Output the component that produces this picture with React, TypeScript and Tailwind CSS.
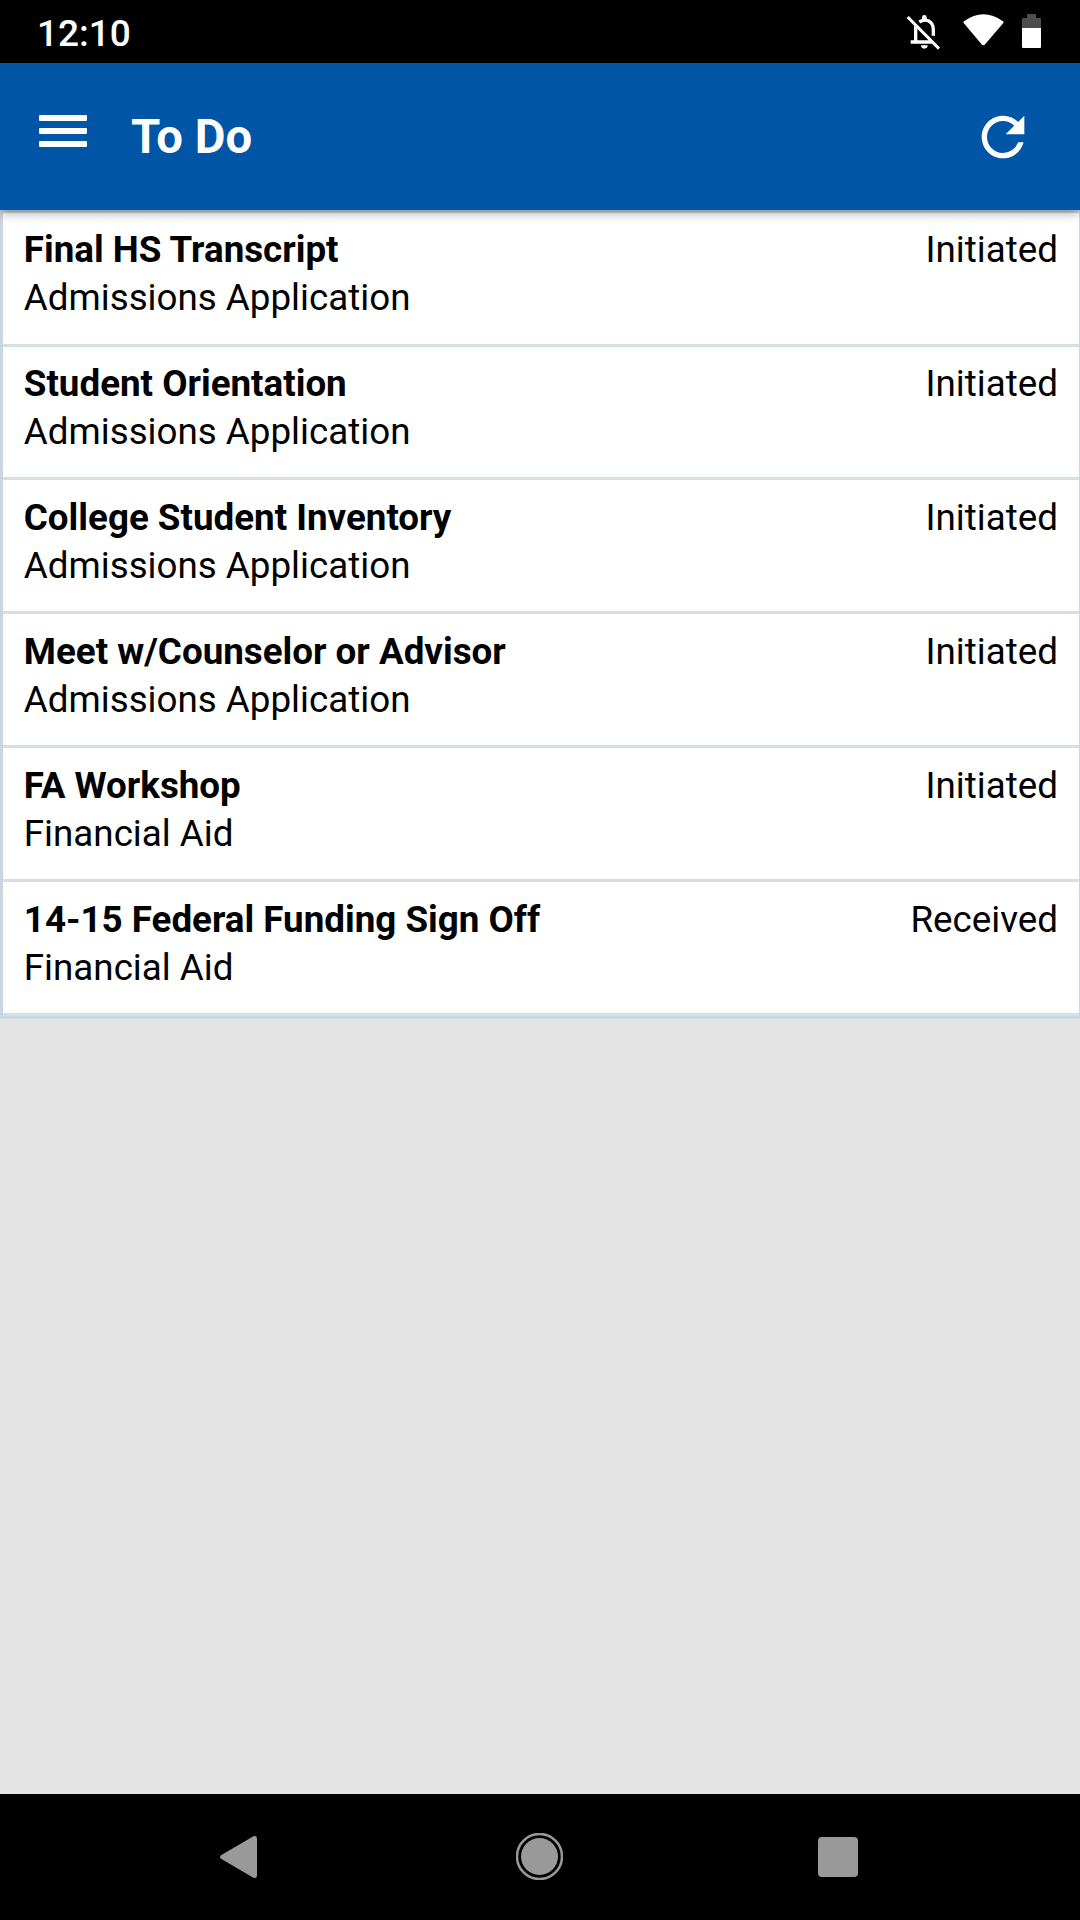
import React from 'react';

const items = [
  { title: 'Final HS Transcript', category: 'Admissions Application', status: 'Initiated' },
  { title: 'Student Orientation', category: 'Admissions Application', status: 'Initiated' },
  { title: 'College Student Inventory', category: 'Admissions Application', status: 'Initiated' },
  { title: 'Meet w/Counselor or Advisor', category: 'Admissions Application', status: 'Initiated' },
  { title: 'FA Workshop', category: 'Financial Aid', status: 'Initiated' },
  { title: '14-15 Federal Funding Sign Off', category: 'Financial Aid', status: 'Received' },
];

function StatusBar() {
  return (
    <div className="flex h-[63px] items-start justify-between bg-black pl-[37px] pr-[37px] text-white">
      <span className="mt-[11px] text-[37px] leading-[45px] font-medium">12:10</span>
      <svg className="mt-[13px] h-[38px] w-[137px]" viewBox="78 39 411 114" fill="#fff">
        {/* muted bell */}
        <path d="M126 57v-5a7 7 0 0 1 14 0v5zM92 121h66v10H92zM102 76l10 10v36h-10zM123 136h20a10 10 0 0 1-20 0z" />
        <path d="M118 66C137 53 160 64 160 89v18" fill="none" stroke="#fff" strokeWidth="10" />
        <path d="M88 46L184 142" stroke="#000" strokeWidth="6" />
        <path d="M83 51L177 146" stroke="#fff" strokeWidth="9" />
        {/* wifi */}
        <path d="M251 69q-2-3 1-5 58-42 117 0 3 2 1 5L314 134q-4 4-8 0z" />
        {/* battery */}
        <path d="M441 42h27v12h12q3 0 3 3v27h-57v-27q0-3 3-3h12z" fill="#4d4d4d" />
        <path d="M426 84h57v57q0 3-3 3h-51q-3 0-3-3z" />
      </svg>
    </div>
  );
}

function Header() {
  return (
    <header className="relative z-10 flex h-[147px] items-center bg-[#0055a6] pl-[39px] pr-[45px] text-white shadow-[0_3px_10px_rgba(0,0,0,0.35)]">
      <button className="mb-[11px] flex flex-col gap-[7px]" aria-label="Menu">
        <span className="h-[6px] w-[48px] rounded-[1px] bg-white" />
        <span className="h-[6px] w-[48px] rounded-[1px] bg-white" />
        <span className="h-[6px] w-[48px] rounded-[1px] bg-white" />
      </button>
      <h1 className="ml-[44px] text-[47.25px] leading-[56px] font-bold">To Do</h1>
      <button className="ml-auto" aria-label="Refresh">
        <svg className="size-16" viewBox="0 0 24 24" fill="currentColor">
          <path d="M17.65 6.35A7.958 7.958 0 0 0 12 4c-4.42 0-7.99 3.58-7.99 8s3.57 8 7.99 8c3.73 0 6.84-2.55 7.73-6h-2.08A5.99 5.99 0 0 1 12 18c-3.31 0-6-2.69-6-6s2.69-6 6-6c1.66 0 3.14.69 4.22 1.78L13 11h7V4l-2.35 2.35z" />
        </svg>
      </button>
    </header>
  );
}

function NavBar() {
  return (
    <nav className="flex h-[126px] items-center bg-black pl-[220px]">
      <svg className="h-[42px] w-[37px]" viewBox="0 0 37 42" fill="#999">
        <path d="M1 19.200L33 .500Q37-1 37 3V39Q37 43 33 41.500L1 22.800Q-1 21 1 19.200Z" />
      </svg>
      <svg className="mb-px ml-[259px] h-[47px] w-[47px]" viewBox="0 0 47 47">
        <circle cx="23.500" cy="23.500" r="22.500" fill="none" stroke="#999" strokeWidth="2.500" />
        <circle cx="23.500" cy="23.500" r="18.500" fill="#999" />
      </svg>
      <div className="ml-[255px] size-10 rounded-[4px] bg-[#999]" />
    </nav>
  );
}

export default function App() {
  return (
    <div className="flex h-[1920px] w-[1080px] flex-col bg-[#e4e4e4] font-[Roboto,sans-serif]">
      <StatusBar />
      <Header />
      <main className="flex-1">
        <ul className="-mt-[0.300px] border-t-[3px] border-r border-b-[3px] border-l-[3px] border-[#c9d6df] bg-white text-[36.75px] leading-[48px] text-black">
          {items.map((item) => (
            <li key={item.title} className="flex h-[133.875px] justify-between border-b-[3px] border-[#d5dfe6] pt-[13.700px] pr-[21px] pl-[20.800px]">
              <div>
                <div className="font-bold">{item.title}</div>
                <div>{item.category}</div>
              </div>
              <div>{item.status}</div>
            </li>
          ))}
        </ul>
      </main>
      <NavBar />
    </div>
  );
}
